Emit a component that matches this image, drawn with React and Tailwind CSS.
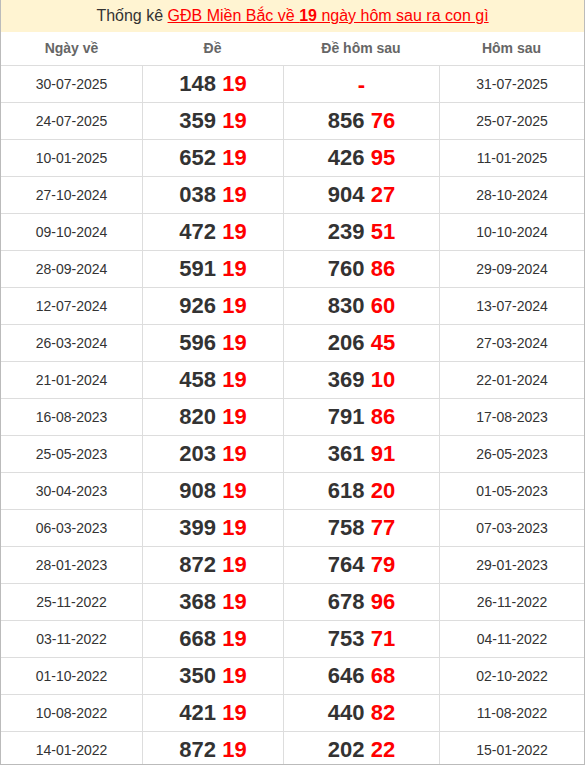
const rows = [
  ["30-07-2025", "148", "19", null, null, "31-07-2025"],
  ["24-07-2025", "359", "19", "856", "76", "25-07-2025"],
  ["10-01-2025", "652", "19", "426", "95", "11-01-2025"],
  ["27-10-2024", "038", "19", "904", "27", "28-10-2024"],
  ["09-10-2024", "472", "19", "239", "51", "10-10-2024"],
  ["28-09-2024", "591", "19", "760", "86", "29-09-2024"],
  ["12-07-2024", "926", "19", "830", "60", "13-07-2024"],
  ["26-03-2024", "596", "19", "206", "45", "27-03-2024"],
  ["21-01-2024", "458", "19", "369", "10", "22-01-2024"],
  ["16-08-2023", "820", "19", "791", "86", "17-08-2023"],
  ["25-05-2023", "203", "19", "361", "91", "26-05-2023"],
  ["30-04-2023", "908", "19", "618", "20", "01-05-2023"],
  ["06-03-2023", "399", "19", "758", "77", "07-03-2023"],
  ["28-01-2023", "872", "19", "764", "79", "29-01-2023"],
  ["25-11-2022", "368", "19", "678", "96", "26-11-2022"],
  ["03-11-2022", "668", "19", "753", "71", "04-11-2022"],
  ["01-10-2022", "350", "19", "646", "68", "02-10-2022"],
  ["10-08-2022", "421", "19", "440", "82", "11-08-2022"],
  ["14-01-2022", "872", "19", "202", "22", "15-01-2022"],
];

const cols = "grid grid-cols-[141px_141px_156px_1fr]";

function Num({ head, tail }) {
  if (!head) return <span className="text-[22px] font-bold text-[#ff0000]">-</span>;
  return (
    <span className="text-[22px] font-bold leading-none">
      <span className="text-[#333]">{head}</span>{" "}
      <span className="text-[#ff0000]">{tail}</span>
    </span>
  );
}

export default function App() {
  return (
    <div
      className="w-[585px] h-[765px] overflow-hidden bg-white border-x border-b border-[#bbbbbb]"
      style={{ fontFamily: '"Liberation Sans", Arial, sans-serif' }}
    >
      <div className="h-[32px] bg-[#fff4d2] flex items-center justify-center text-[16px] text-[#333]">
        <span>
          Thống kê{" "}
          <a className="text-[#ff0000] underline" href="#">
            GĐB Miền Bắc về <b>19</b> ngày hôm sau ra con gì
          </a>
        </span>
      </div>

      <div className={`${cols} h-[34px] border-b border-[#dddddd] text-[14px] font-bold text-[#666]`}>
        <div className="flex items-center justify-center">Ngày về</div>
        <div className="flex items-center justify-center">Đề</div>
        <div className="flex items-center justify-center">Đề hôm sau</div>
        <div className="flex items-center justify-center">Hôm sau</div>
      </div>

      {rows.map((r, i) => (
        <div key={i} className={`${cols} h-[37px] border-b border-[#dddddd] text-[14px] text-[#333]`}>
          <div className="flex items-center justify-center">{r[0]}</div>
          <div className="flex items-center justify-center border-l border-[#dddddd]">
            <Num head={r[1]} tail={r[2]} />
          </div>
          <div className="flex items-center justify-center border-l border-[#dddddd]">
            <Num head={r[3]} tail={r[4]} />
          </div>
          <div className="flex items-center justify-center border-l border-[#dddddd]">{r[5]}</div>
        </div>
      ))}
    </div>
  );
}
